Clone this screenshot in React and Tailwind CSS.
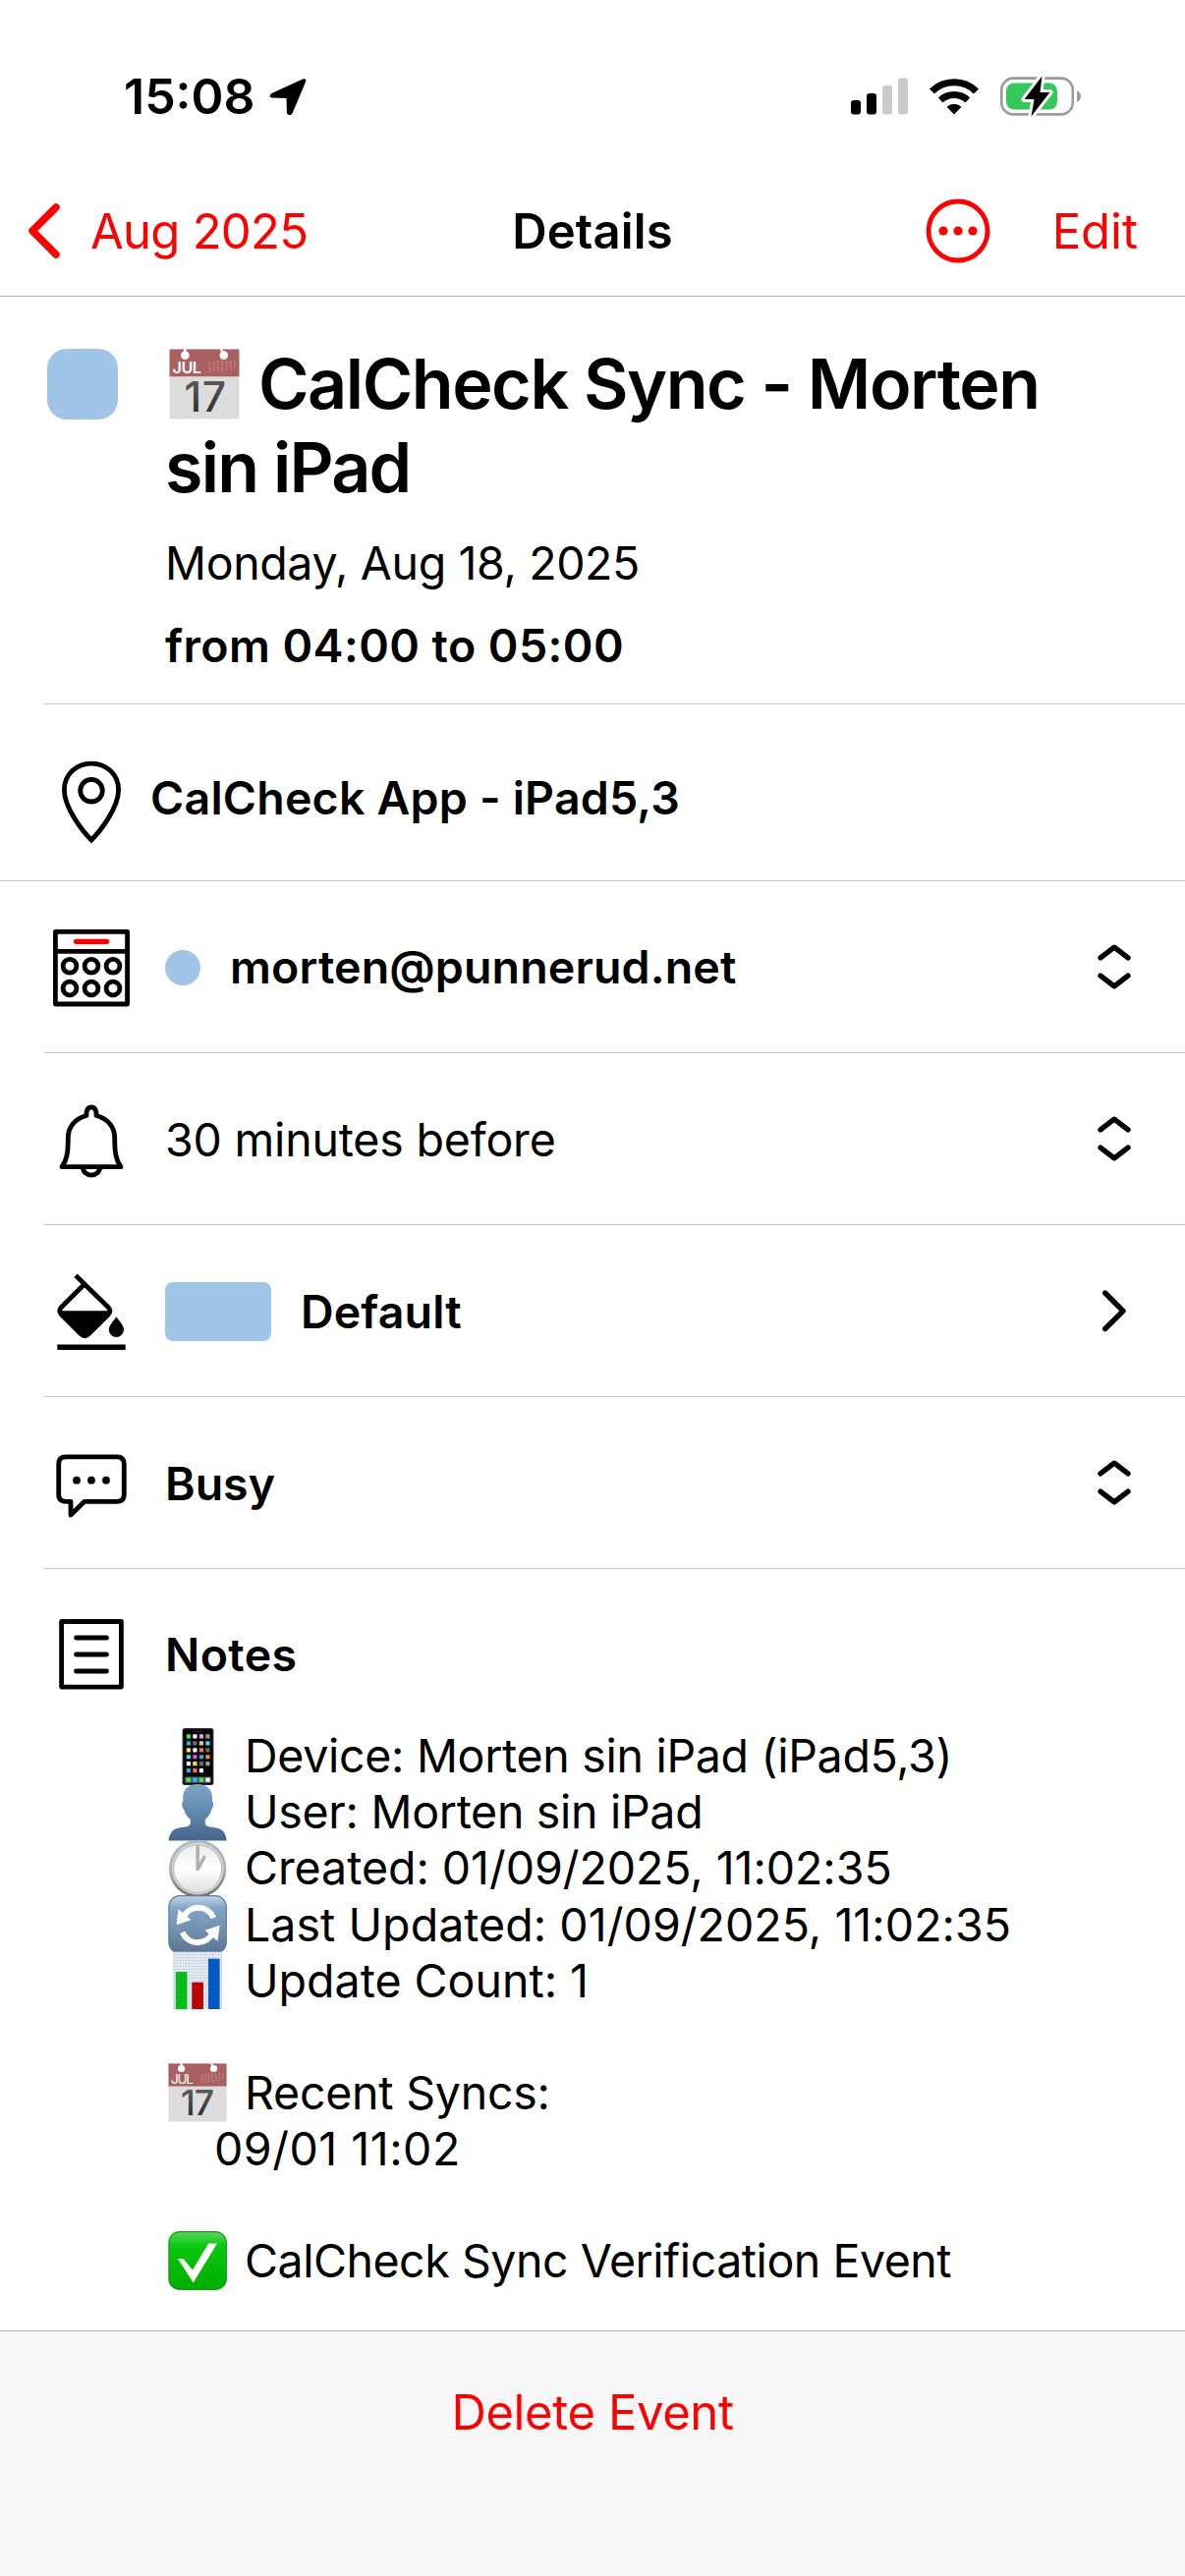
import React from "react";

const RowIcon = ({ children }) => (
  <svg
    viewBox="0 0 90 90"
    className="w-[90px] h-[90px] shrink-0"
    fill="none"
    stroke="black"
    strokeWidth="4.8"
    strokeLinejoin="round"
  >
    {children}
  </svg>
);

const PinIcon = () => (
  <RowIcon>
    <path
      d="M45 84C37 76 17.4 52 17.4 33C17.4 17 30 6.2 45 6.2S72.6 17 72.6 33C72.6 52 53 76 45 84Z"
      strokeLinejoin="miter"
    />
    <circle cx="45" cy="33.7" r="11.3" />
  </RowIcon>
);

const CalendarIcon = () => (
  <RowIcon>
    <rect x="8.4" y="8.4" width="73.2" height="73.6" />
    <path d="M8 28.3H82" />
    <path d="M29.5 18.3H60.5" stroke="#ff0000" strokeWidth="5.2" strokeLinecap="round" />
    {[43.3, 66].map((cy) =>
      [23, 45, 67].map((cx) => <circle key={`${cx}-${cy}`} cx={cx} cy={cy} r="6.9" />)
    )}
  </RowIcon>
);

const BellIcon = () => (
  <RowIcon>
    <path d="M40 20.5C28.5 23.5 21.3 32 21.3 43C21.3 57 20.5 65 15 72.7H75C69.5 65 68.7 57 68.7 43C68.7 32 61.5 23.5 50 20.5C50.5 16 49 12 45 12S39.5 16 40 20.5Z" />
    <path d="M36.3 73a8.7 8.2 0 0 0 17.4 0" />
  </RowIcon>
);

const BucketIcon = () => (
  <RowIcon>
    <path
      d="M29 8.3L62 40.5Q66 44.3 62 48.2L42.3 67.8Q38.3 71.5 34.3 67.8L14.5 48.2Q11 44.3 14.5 40.5L36.5 18.5"
      strokeLinejoin="miter"
    />
    <path d="M12 44.3H65L40 69H36Z" fill="black" stroke="none" />
    <path
      d="M70.4 50.3C73.5 55 78 59 78 63.5A7.6 7.6 0 0 1 62.8 63.5C62.8 59 67.3 55 70.4 50.3Z"
      fill="black"
      stroke="none"
    />
    <path d="M10.3 81.3H79.7" strokeWidth="5.5" />
  </RowIcon>
);

const BubbleIcon = () => (
  <RowIcon>
    <path d="M19 17.9H71Q78.3 17.9 78.3 25.2V56Q78.3 63.3 71 63.3H38L24 77V63.3H19Q11.7 63.3 11.7 56V25.2Q11.7 17.9 19 17.9Z" />
    {[30, 45, 60].map((cx) => (
      <circle key={cx} cx={cx} cy="41.7" r="3.9" fill="black" stroke="none" />
    ))}
  </RowIcon>
);

const NotesIcon = () => (
  <RowIcon>
    <rect x="14.6" y="11.5" width="60.8" height="66.6" />
    <path d="M29.5 28H60.5M29.5 45H60.5M29.5 62H60.5" strokeLinecap="round" />
  </RowIcon>
);

const RowArrow = ({ d }) => (
  <svg
    viewBox="0 0 34 48"
    className="w-[34px] h-12 ml-auto mr-[55px] -mt-px shrink-0"
    fill="none"
    stroke="black"
    strokeWidth="5.4"
    strokeLinecap="round"
    strokeLinejoin="round"
  >
    <path d={d} />
  </svg>
);

const Selector = () => <RowArrow d="M3 14.8L17 4.2L31 14.8M3 33.2L17 43.8L31 33.2" />;
const Chevron = () => <RowArrow d="M7.7 6L26 24.3L7.7 42.5" />;

/* Emoji drawings, all on a 60x60 box */

const CalendarEmoji = ({ className }) => (
  <svg viewBox="0 0 60 60" overflow="visible" className={className}>
    <defs>
      <linearGradient id="day" x1="0" y1="0" x2="0" y2="1">
        <stop offset="0" stopColor="#666" />
        <stop offset="1" stopColor="#222" />
      </linearGradient>
    </defs>
    <rect x="0.5" y="0" width="59" height="59.5" fill="#dcdcdc" />
    <rect x="0.5" y="0.5" width="59" height="23" fill="#aa5f60" />
    <path d="M13.6 0V5M44 0L46.5 5" stroke="white" strokeWidth="2" />
    <circle cx="13.6" cy="5.5" r="3.6" fill="white" />
    <circle cx="46.5" cy="5.5" r="3.6" fill="white" />
    <path
      d="M34.5 12V20M38 11V20M41.5 10.5V20M45 10.5V20M48.7 10.5V18M52.3 10.5V18M56 10.5V17"
      stroke="#c58d8e"
      strokeWidth="1.6"
      strokeDasharray="1.2 1"
    />
    <text x="3" y="20.7" fontSize="13.5" fill="white" textLength="23" className="font-['Inter']">
      JUL
    </text>
    <text
      x="13"
      y="53.3"
      fontSize="35.5"
      fill="url(#day)"
      textLength="34"
      className="font-['Inter'] font-medium"
    >
      17
    </text>
  </svg>
);

const apps = [
  ["#4fe06a", "#f5f5f5", "#e29af0", "#9a9a9a"],
  ["#22b0f5", "#6b6b6b", "#dcc6a0", "#55d4f8"],
  ["#fce14e", "#f5f5f5", "#fa6a5e", "#6b6b6b"],
  ["#4fdbe8", "#e552e0", "#22b0f5", "#fb9310"],
  ["#f0f0f0", "#fce14e", "#6b6b6b", "#9a9a9a"],
  ["#22b0f5", "#fa6a5e", "#f5f5f5"],
];

const dock = ["#4fe06a", "#18c5f7", "#4fe06a", "#f5f5f5"];

const PhoneEmoji = ({ className }) => (
  <svg viewBox="0 0 60 60" className={className}>
    <rect x="14.6" y="1" width="31.8" height="58" rx="2.5" fill="#2b2b2b" />
    <rect x="15.8" y="2.2" width="29.4" height="55.6" rx="1.5" fill="#050505" />
    <path d="M27 4.5H35" stroke="#222" strokeWidth="1.5" />
    <rect x="17" y="50.5" width="27" height="6.3" rx="1" fill="#5a5a5a" />
    {apps.map((row, r) =>
      row.map((color, c) => (
        <rect
          key={`${r}-${c}`}
          x={18.8 + c * 6.5}
          y={7.3 + r * 6.95}
          width="4.2"
          height="4.2"
          rx="0.6"
          fill={color}
        />
      ))
    )}
    {dock.map((color, c) => (
      <rect key={c} x={18.8 + c * 6.5} y="51.6" width="4.2" height="4.2" rx="0.6" fill={color} />
    ))}
  </svg>
);

const UserEmoji = ({ className }) => (
  <svg viewBox="0 0 60 60" className={className}>
    <defs>
      <linearGradient id="bust" x1="0" y1="0" x2="0" y2="1">
        <stop offset="0" stopColor="#7ea5c5" />
        <stop offset="0.5" stopColor="#6288ae" />
        <stop offset="1" stopColor="#456488" />
      </linearGradient>
    </defs>
    <path
      d="M30 1C39 1 45.2 6 45 15V18.5C46.8 19 46.3 25 44.5 26.5C43 32 40.5 35 37.8 37V41C38.5 44.5 43 44.5 48 45.2C56 46.5 59 51 59.7 58.5H0.6C1.3 51 4.5 46.5 12 45.2C17 44.5 22 44.5 22.8 41V37C20 35 17.5 32 16 26.5C14 25 13.5 19 15.3 18.5V15C15 6 21 1 30 1Z"
      fill="url(#bust)"
    />
  </svg>
);

const ClockEmoji = ({ className }) => (
  <svg viewBox="0 0 60 60" className={className}>
    <defs>
      <linearGradient id="rim" x1="0" y1="0" x2="0" y2="1">
        <stop offset="0" stopColor="#a9b7c9" />
        <stop offset="0.5" stopColor="#b5b0aa" />
        <stop offset="1" stopColor="#6d6d6d" />
      </linearGradient>
      <linearGradient id="face" x1="0" y1="0" x2="0" y2="1">
        <stop offset="0" stopColor="#ececec" />
        <stop offset="0.5" stopColor="#ffffff" />
        <stop offset="1" stopColor="#dedede" />
      </linearGradient>
    </defs>
    <circle cx="30.2" cy="30" r="29.2" fill="url(#rim)" />
    <circle cx="30.2" cy="30" r="26.5" fill="#d5d8dc" />
    <circle cx="30.2" cy="30.3" r="24.5" fill="url(#face)" stroke="#a8a8a8" strokeWidth="0.8" />
    <path
      d="M30.2 8V30.5L36.8 18.5"
      fill="none"
      stroke="#b0b0b0"
      strokeWidth="3.6"
      strokeLinejoin="round"
      strokeLinecap="round"
    />
  </svg>
);

const RefreshEmoji = ({ className }) => (
  <svg viewBox="0 0 60 60" className={className}>
    <defs>
      <linearGradient id="tile" x1="0" y1="0" x2="0" y2="1">
        <stop offset="0" stopColor="#c3d5e6" />
        <stop offset="0.22" stopColor="#82a5c6" />
        <stop offset="0.6" stopColor="#7090b0" />
        <stop offset="1" stopColor="#5d7690" />
      </linearGradient>
    </defs>
    <rect
      x="0.9"
      y="0.6"
      width="58.4"
      height="58.4"
      rx="11"
      fill="url(#tile)"
      stroke="#5c7c9e"
      strokeWidth="1.2"
    />
    {[0, 180].map((angle) => (
      <g key={angle} transform={`rotate(${angle} 30.5 30.5)`}>
        <path d="M15.5 22.7A16.8 16.8 0 0 1 46.3 23.2" fill="none" stroke="white" strokeWidth="6" />
        <path d="M8.5 30.2L10.5 14.2L23.5 25.2Z" fill="white" />
      </g>
    ))}
  </svg>
);

const ChartEmoji = ({ className }) => (
  <svg viewBox="0 0 60 60" className={className}>
    <defs>
      <pattern id="grid" width="3" height="3" patternUnits="userSpaceOnUse">
        <rect width="3" height="3" fill="#eaeef2" />
        <path d="M0 0H3M0 0V3" stroke="#b5cbde" strokeWidth="1" />
      </pattern>
    </defs>
    <rect x="4.8" y="0.7" width="50.4" height="58.5" fill="url(#grid)" />
    <rect x="7.8" y="21" width="11.6" height="38" fill="#04bd18" />
    <rect x="24.3" y="31.7" width="11.6" height="27.3" fill="#bb0304" />
    <rect x="41" y="7.7" width="11.6" height="51.3" fill="#0458c4" />
  </svg>
);

const CheckEmoji = ({ className }) => (
  <svg viewBox="0 0 60 60" className={className}>
    <defs>
      <linearGradient id="green" x1="0" y1="0" x2="0" y2="1">
        <stop offset="0" stopColor="#5bd65b" />
        <stop offset="0.25" stopColor="#08c80e" />
        <stop offset="1" stopColor="#00ad00" />
      </linearGradient>
    </defs>
    <rect
      x="0.9"
      y="0.7"
      width="58.4"
      height="58.7"
      rx="11"
      fill="url(#green)"
      stroke="#119c1a"
      strokeWidth="1.2"
    />
    <path d="M10 28H15.5L25 39.5L41.3 12.5H50L25.7 52.5Z" fill="white" />
  </svg>
);

const notes = [
  { Icon: PhoneEmoji, text: "Device: Morten sin iPad (iPad5,3)", tracking: "tracking-[-0.0065em]" },
  { Icon: UserEmoji, text: "User: Morten sin iPad", tracking: "tracking-[-0.0065em]" },
  { Icon: ClockEmoji, text: "Created: 01/09/2025, 11:02:35", tracking: "tracking-[-0.001em]" },
  { Icon: RefreshEmoji, text: "Last Updated: 01/09/2025, 11:02:35", tracking: "tracking-[0.001em]" },
  { Icon: ChartEmoji, text: "Update Count: 1", tracking: "tracking-normal" },
  {},
  { Icon: CalendarEmoji, text: "Recent Syncs:", tracking: "tracking-[-0.005em]" },
  { text: "09/01 11:02", tracking: "tracking-[0.011em]" },
  {},
  { Icon: CheckEmoji, text: "CalCheck Sync Verification Event", tracking: "tracking-[-0.01em]" },
];

const StatusBar = () => (
  <div className="h-[168px] pt-[28px] pl-[126px] pr-[105px] flex items-center">
    <span className="text-[50px] leading-none font-semibold -mt-px">15:08</span>
    <svg viewBox="0 0 40 40" className="w-10 h-10 ml-[13px] -mt-px">
      <path
        d="M3.5 17L35 2.5Q39.5 1 38 5.5L24.5 37.5Q22 41 19 37.5L18.5 22L3.5 21.5Q-0.5 20 3.5 17Z"
        fill="black"
      />
    </svg>
    <div className="ml-auto flex items-center">
      <svg viewBox="0 0 60 38" className="w-[60px] h-[38px]">
        <rect x="1" y="23" width="10" height="14.5" rx="3" />
        <rect x="17" y="16" width="10" height="21.5" rx="3" />
        <rect x="33" y="8" width="10" height="29.5" rx="3" fill="#cbcbcb" />
        <rect x="49" y="0.5" width="10" height="37" rx="3" fill="#cbcbcb" />
      </svg>
      <svg viewBox="0 0 52 38" className="w-[52px] h-[38px] ml-5" fill="none" stroke="black">
        <path d="M3.5 14A32 32 0 0 1 48.5 14" strokeWidth="7.2" />
        <path d="M12.2 23A20 20 0 0 1 39.8 23" strokeWidth="6.8" />
        <path d="M26 37.5L18.5 29.8Q26 23.5 33.5 29.8Z" fill="black" stroke="none" />
      </svg>
      <svg viewBox="0 0 84 42" className="w-[84px] h-[42px] ml-5">
        <rect
          x="2.3"
          y="2.6"
          width="72.5"
          height="36.8"
          rx="12"
          fill="none"
          stroke="#9b9b9b"
          strokeWidth="2.6"
        />
        <path d="M79 15Q83 17 83 21T79 27Z" fill="#9b9b9b" />
        <rect x="7" y="7.5" width="52" height="27" rx="8" fill="#34c759" />
        <path
          d="M43.5 0.5L25.5 24H35.5L32.5 41.5L51.5 17H41.5Z"
          fill="black"
          stroke="white"
          strokeWidth="6"
          strokeLinejoin="round"
          paintOrder="stroke"
        />
      </svg>
    </div>
  </div>
);

const NavBar = () => (
  <div className="h-[134px] border-b border-[#b2b2b2] grid grid-cols-3 items-center text-[49px] leading-none">
    <div className="flex items-center pl-7 text-[#ff0000]">
      <svg
        viewBox="0 0 34 58"
        className="w-[34px] h-[58px]"
        fill="none"
        stroke="currentColor"
        strokeWidth="7.5"
        strokeLinecap="round"
        strokeLinejoin="round"
      >
        <path d="M29 5L5 29L29 53" />
      </svg>
      <span className="ml-[30px] pt-px tracking-[-0.015em] whitespace-nowrap">Aug 2025</span>
    </div>
    <div className="text-center pt-px font-semibold tracking-[0.003em]">Details</div>
    <div className="flex items-center justify-end pr-[48px] text-[#ff0000]">
      <svg viewBox="0 0 66 66" className="w-[66px] h-[66px] mr-[63px]" fill="currentColor">
        <circle cx="33" cy="33" r="30" fill="none" stroke="currentColor" strokeWidth="4.8" />
        <circle cx="18" cy="33" r="4.6" />
        <circle cx="33" cy="33" r="4.6" />
        <circle cx="48" cy="33" r="4.6" />
      </svg>
      <span className="pt-px">Edit</span>
    </div>
  </div>
);

const Row = ({ icon, children }) => (
  <div className="h-[175px] ml-[45px] pl-[3px] pt-px border-b border-[#c6c6c8] flex items-center">
    {icon}
    <div className="flex flex-1 items-center ml-[30px]">{children}</div>
  </div>
);

const App = () => {
  return (
    <div className="w-[1206px] h-[2622px] bg-white text-black font-['Inter',sans-serif] flex flex-col overflow-hidden text-[46.5px] leading-none whitespace-nowrap">
      <StatusBar />
      <NavBar />

      <div className="h-[415px] ml-[45px] pl-[3px] pt-[46px] border-b border-[#c6c6c8] flex items-start">
        <div className="w-[72px] h-[72px] mt-[7px] rounded-[20px] bg-[#a0c5e7]" />
        <div className="ml-[48px]">
          <h1 className="text-[70px] leading-[85px] font-semibold tracking-[-0.026em]">
            <span className="flex items-center tracking-[-0.021em]">
              <CalendarEmoji className="w-[72px] h-[72px] ml-[4px] mr-[19px]" />
              CalCheck Sync - Morten
            </span>
            sin iPad
          </h1>
          <p className="mt-[13px] leading-[84px] tracking-[-0.008em]">Monday, Aug 18, 2025</p>
          <p className="leading-[84px] font-semibold tracking-[0.009em]">from 04:00 to 05:00</p>
        </div>
      </div>

      <div className="h-[180px] pl-12 border-b border-[#c6c6c8] flex items-center pt-[18px]">
        <PinIcon />
        <span className="ml-[15px] -mt-[7px] font-semibold tracking-[0.0045em]">CalCheck App - iPad5,3</span>
      </div>

      <Row icon={<CalendarIcon />}>
        <span className="w-9 h-9 rounded-full bg-[#a0c5e7]" />
        <span className="ml-[30px] font-semibold tracking-[0.003em]">morten@punnerud.net</span>
        <Selector />
      </Row>
      <Row icon={<BellIcon />}>
        <span className="pt-px tracking-[-0.004em]">30 minutes before</span>
        <Selector />
      </Row>
      <Row icon={<BucketIcon />}>
        <span className="w-[108px] h-[60px] rounded-lg bg-[#a0c5e7]" />
        <span className="ml-[30px] pt-px font-semibold tracking-[0.003em]">Default</span>
        <Chevron />
      </Row>
      <Row icon={<BubbleIcon />}>
        <span className="pt-px font-semibold">Busy</span>
        <Selector />
      </Row>

      <div className="h-[174px] pl-12 flex items-center">
        <NotesIcon />
        <span className="ml-[30px] pt-px font-semibold tracking-[0.008em]">Notes</span>
      </div>
      <div className="-mt-[12px] pl-[171px]">
        {notes.map(({ Icon, text, tracking }, i) => (
          <div key={i} className="h-[57.1px] flex items-center">
            {Icon && <Icon className="w-[60px] h-[60px] shrink-0" />}
            <span className={`${Icon ? "ml-[18px]" : "ml-[47px]"} ${tracking}`}>{text}</span>
          </div>
        ))}
      </div>

      <div className="mt-auto h-[250px] bg-[#f7f7f7] border-t border-[#b2b2b2] pt-[58px] text-center text-[49px] text-[#ff0000] tracking-[-0.008em]">
        Delete Event
      </div>
    </div>
  );
};

export default App;
